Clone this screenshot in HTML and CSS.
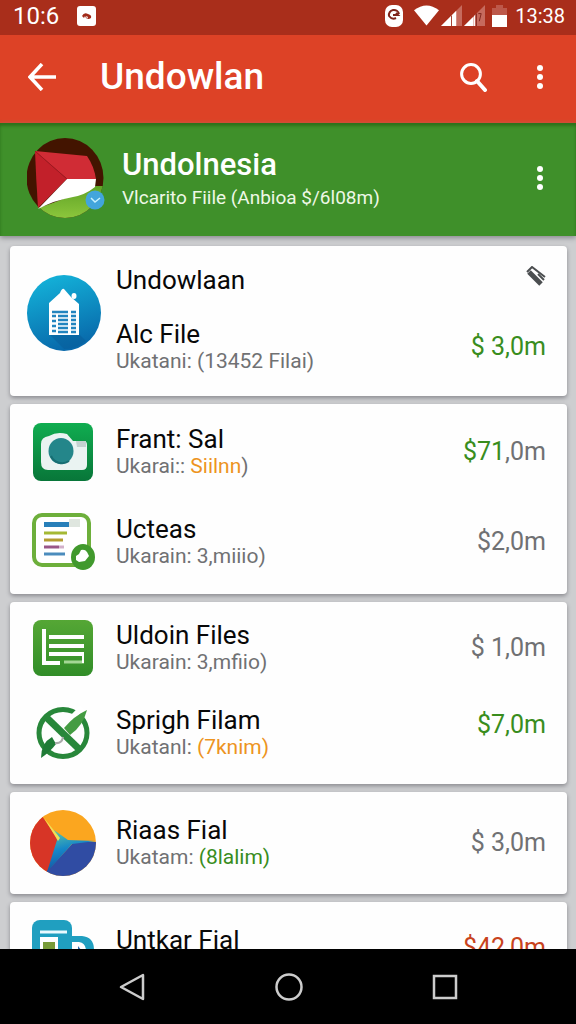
FILE: index.html
```html
<!DOCTYPE html>
<html lang="id">
<head>
<meta charset="utf-8">
<meta name="viewport" content="width=device-width, initial-scale=1">
<title>Undowlan</title>
<link rel="stylesheet" href="styles.css">
</head>
<body>
<div class="status">
  <span class="status-time">10:6</span>
  <svg class="status-app" width="20" height="20" viewBox="0 0 20 20"><rect width="19" height="20" rx="3" fill="#fff"/><path d="M5 10q2-4 6-2 4 1 3 4-3 2-5 0l-1-2-1 2z" fill="#a12a19"/><path d="M9 10l1 3 1-2z" fill="#fff"/></svg>
  <div class="status-right">
    <svg width="18" height="22" viewBox="0 0 18 22"><rect width="18" height="22" rx="7" fill="#fff"/><path d="M4 11a5 5 0 1 1 10-2M4 11q3 4 7 2M8 10h5l-2-2" fill="none" stroke="#7f251b" stroke-width="2"/></svg>
    <svg class="wifi" width="25" height="21" viewBox="0 0 26 21"><path d="M0 5Q13-5 26 5L13 21z" fill="#fff"/></svg>
    <svg width="21" height="21" viewBox="0 0 22 22"><path d="M0 22L22 0V22z" fill="#c66a5d"/><path d="M0 22L16 6V22z" fill="#fff"/><path d="M11 11v11" stroke="#a43a2b"/></svg>
    <svg width="21" height="21" viewBox="0 0 22 22"><path d="M0 22L22 0V22z" fill="#c66a5d"/><path d="M0 22L10 12V22z" fill="#fff"/><path d="M13 9v13M15 9h3l-2 8" stroke="#7f251b" fill="none"/><path d="M11 11v11" stroke="#fff"/></svg>
    <svg class="battery" width="15" height="22" viewBox="0 0 15 22"><path d="M0 3h4V0h7v3h4v8H0z" fill="#bd584a"/><path d="M0 10h15v12H0z" fill="#fff"/></svg>
    <span>13:38</span>
  </div>
</div>
<header class="appbar">
  <button class="icon-btn back" aria-label="Back"><svg width="28" height="28" viewBox="0 0 28 28"><path d="M28 14H2M14 1L2 14l12 13" fill="none" stroke="#fff" stroke-width="3.500"/></svg></button>
  <h1>Undowlan</h1>
  <button class="icon-btn search" aria-label="Search"><svg width="28" height="29" viewBox="0 0 28 29"><circle cx="11" cy="11" r="9.4" fill="none" stroke="#fff" stroke-width="3"/><path d="M17 18l8 9" stroke="#fff" stroke-width="4" stroke-linecap="round"/></svg></button>
  <button class="icon-btn" aria-label="More"><svg width="8" height="26" viewBox="0 0 8 26" fill="#fff"><circle cx="4" cy="4" r="3"/><circle cx="4" cy="13" r="3"/><circle cx="4" cy="22" r="3"/></svg></button>
</header>
<section class="profile">
  <svg class="avatar" width="78" height="80" viewBox="0 0 78 80">
    <defs><clipPath id="av"><ellipse cx="38" cy="40" rx="38.500" ry="40"/></clipPath>
    <linearGradient id="hill" x1="0" y1="0" x2="0" y2="1"><stop offset="0" stop-color="#5fa326"/><stop offset="1" stop-color="#8cc63c"/></linearGradient></defs>
    <g clip-path="url(#av)"><rect width="78" height="80" fill="#431400"/><path d="M0 72L11 70Q36 62 52 54Q62 49 69 48H78V80H0z" fill="url(#hill)"/></g>
    <path d="M8 13L40 41L11 70Q9 40 8 13z" fill="#c2202a"/><path d="M8 13L60 18Q67 28 69 41H40z" fill="#d02c35"/><path d="M40 41H69L68 49Q58 57 46 59Q28 62 11 71z" fill="#fff"/>
    <path d="M8 13L40 41" stroke="#9f1820"/>
    <circle cx="68" cy="62" r="9.500" fill="#42a5dc"/><path d="M64 60l4 4 5-4" fill="none" stroke="#c8f2ff" stroke-width="1.500"/>
  </svg>
  <div class="profile-text"><h2>Undolnesia</h2><p>Vlcarito Fiile (Anbioa $/6l08m)</p></div>
  <button class="icon-btn" aria-label="Profile options"><svg width="8" height="26" viewBox="0 0 8 26" fill="#fff"><circle cx="4" cy="4" r="3"/><circle cx="4" cy="13" r="3"/><circle cx="4" cy="22" r="3"/></svg></button>
</section>
<main>
  <section class="card featured">
    <svg class="feature-icon" width="76" height="78" viewBox="0 0 76 78">
      <defs><linearGradient id="blue" x1=".2" y1="0" x2=".5" y2="1"><stop offset="0" stop-color="#14b4da"/><stop offset="1" stop-color="#0868aa"/></linearGradient></defs>
      <ellipse cx="38" cy="39" rx="37" ry="38" fill="url(#blue)"/><path d="M23 60l15 15q12 0 22-8l-8-8z" fill="#075b98" opacity=".5"/>
      <path d="M23 29L34 19Q36 14 38 15L45 23L53 30V61H23z" fill="#fff"/><ellipse cx="48" cy="22" rx="2.500" ry="3" fill="#fff"/>
      <path d="M26 38h16M26 42h4M32 42h10M26 47h4M32 46h10M26 52h4M32 50h10M26 57h4M32 54h10M32 58h10M45 38h5M45 42h5M45 46h5M45 50h5M45 54h5M45 58h5" stroke="#2385bf" stroke-width="2.500"/>
    </svg>
    <div class="feature-body">
      <div class="feature-head"><h3>Undowlaan</h3><button class="icon-btn" aria-label="Edit"><svg width="20" height="22" viewBox="0 0 20 22"><path d="M3 6L15 18" stroke="#4b4e50" stroke-width="5"/><path d="M1 6L6 1L19 11" fill="none" stroke="#4b4e50" stroke-width="2"/><path d="M12 8L18 14" stroke="#4b4e50" stroke-width="2"/></svg></button></div>
      <div class="feature-row"><div><h3>Alc File</h3><p>Ukatani: (13452 Filai)</p></div><span class="amount green">$ 3,0m</span></div>
    </div>
  </section>
  <ul class="card">
    <li class="row">
      <svg width="60" height="58" viewBox="0 0 60 58"><defs><linearGradient id="cam" x1="0" y1="0" x2="0" y2="1"><stop offset="0" stop-color="#10ad50"/><stop offset="1" stop-color="#087639"/></linearGradient></defs><rect width="60" height="58" rx="8" fill="url(#cam)"/><path d="M8 21Q8 14 16 13Q24 8 34 11L40 18H51Q54 18 54 22V42Q54 47 49 47H15Q8 47 8 39z" fill="#eaf3f2"/><path d="M43 18h10v6H44z" fill="#c4d2d1"/><ellipse cx="28" cy="28" rx="12.500" ry="13" fill="#24868a"/><path d="M18 33a12 12 0 0 0 18 5" fill="none" stroke="#176e73" stroke-width="2"/></svg>
      <div><h3>Frant: Sal</h3><p>Ukarai:: <span class="orange">Siilnn</span>)</p></div><span class="amount"><span class="green">$71</span>,0m</span>
    </li>
    <li class="row">
      <svg width="63" height="57" viewBox="0 0 63 57"><rect x="2" y="2" width="55" height="50" rx="8" fill="#fff" stroke="#6daf3b" stroke-width="4"/><path d="M37 6h11v8H37z" fill="#dfe6df"/><path d="M12 11.500h25" stroke="#287fb9" stroke-width="5"/><path d="M12 20h23" stroke="#a5b934" stroke-width="3"/><path d="M12 27h19" stroke="#b39b31" stroke-width="3"/><path d="M12 34h15" stroke="#995688" stroke-width="3"/><path d="M27 34h5" stroke="#d2b0ca" stroke-width="3"/><path d="M12 41h21" stroke="#4b8cbd" stroke-width="3"/><ellipse cx="51" cy="44" rx="12" ry="13" fill="#41992d"/><path d="M44 43l3-2 2-4q4-1 6 2l2 4-4 5-6 1-3-2z" fill="#fff"/></svg>
      <div><h3>Ucteas</h3><p>Ukarain: 3,miiio)</p></div><span class="amount">$2,0m</span>
    </li>
  </ul>
  <ul class="card tight">
    <li class="row">
      <svg width="60" height="56" viewBox="0 0 60 56"><defs><linearGradient id="doc" x1="0" y1="0" x2="0" y2="1"><stop offset="0" stop-color="#55a735"/><stop offset="1" stop-color="#318d28"/></linearGradient></defs><rect width="60" height="56" rx="8" fill="url(#doc)"/><path d="M11 9v34h16M16 17h35M16 26h35M16 34h35" fill="none" stroke="#fff" stroke-width="4"/><path d="M31 42h20" stroke="#a4d795" stroke-width="3"/><path d="M50 34v9" stroke="#fff" stroke-width="2"/></svg>
      <div><h3>Uldoin Files</h3><p>Ukarain: 3,mfiio)</p></div><span class="amount">$ 1,0m</span>
    </li>
    <li class="row raised">
      <svg width="54" height="54" viewBox="0 0 54 54"><ellipse cx="27" cy="27" rx="24" ry="23.500" fill="none" stroke="#28873a" stroke-width="5"/><path d="M36 12L46 2" stroke="#fff" stroke-width="6"/><path d="M51 4Q38 10 28 22L34 29Q47 20 51 4z" fill="#449c42"/><path d="M10 11l33 32" stroke="#28873a" stroke-width="7"/><path d="M5 52Q5 37 16 31L20 38Q14 46 5 52z" fill="#1f7b36"/><path d="M19 37q7 1 8-6" fill="none" stroke="#aaa" stroke-width="2"/></svg>
      <div><h3>Sprigh Filam</h3><p>Ukatanl: <span class="orange">(7knim)</span></p></div><span class="amount green">$7,0m</span>
    </li>
  </ul>
  <ul class="card single">
    <li class="row">
      <svg width="66" height="66" viewBox="0 0 66 66"><defs><clipPath id="pie"><circle cx="33" cy="33" r="33"/></clipPath><linearGradient id="teal" x1="0" y1="0" x2=".3" y2="1"><stop offset="0" stop-color="#65cb9f"/><stop offset=".5" stop-color="#1587c8"/><stop offset="1" stop-color="#164f9c"/></linearGradient></defs><g clip-path="url(#pie)"><rect width="66" height="66" fill="#fba61f"/><path d="M12 6L29 31L17 66H0V0z" fill="#d73526"/><path d="M66 32H44L16 62V66H66z" fill="#304ca3"/><path d="M24 20L38 30L66 31L42 34L17 62L27 30z" fill="url(#teal)"/><path d="M14 8l14 23 2-3z" fill="#f0df55"/></g></svg>
      <div><h3>Riaas Fial</h3><p>Ukatam: <span class="green">(8lalim)</span></p></div><span class="amount">$ 3,0m</span>
    </li>
  </ul>
  <ul class="card last">
    <li class="row">
      <svg width="62" height="60" viewBox="0 0 62 60"><rect x="0" y="0" width="40" height="60" rx="8" fill="#209fc0"/><path d="M36 16h14q12 1 12 14v14H36z" fill="#209fc0"/><path d="M8 12h27" stroke="#e9faff" stroke-width="3"/><path d="M8 17h18v33H8z" fill="#fff"/><path d="M11 22h12v20H11z" fill="#789b38"/><path d="M40 22h7q7 1 7 9v8H40z" fill="#fff"/><path d="M46 26l7 9h-7z" fill="#286bb1"/></svg>
      <h3>Untkar Fial</h3><span class="amount red">$42,0m</span>
    </li>
  </ul>
</main>
<nav class="navbar" aria-label="System">
  <button class="icon-btn" aria-label="Back"><svg width="28" height="30" viewBox="0 0 28 30"><path d="M25 3v24L3 15z" fill="none" stroke="#ccc" stroke-width="2.500" stroke-linejoin="round"/></svg></button>
  <button class="icon-btn" aria-label="Home"><svg width="28" height="28" viewBox="0 0 28 28"><circle cx="14" cy="14" r="12.500" fill="none" stroke="#ccc" stroke-width="2.500"/></svg></button>
  <button class="icon-btn" aria-label="Recent apps"><svg width="26" height="26" viewBox="0 0 26 26"><rect x="2" y="2" width="22" height="22" fill="none" stroke="#ccc" stroke-width="2.500"/></svg></button>
</nav>
</body>
</html>
```
FILE: styles.css
```css
* { box-sizing: border-box; }
body {
  margin: 0;
  height: 100vh;
  display: flex;
  flex-direction: column;
  overflow: hidden;
  background: #cdced0;
  color: #080808;
  font-family: Roboto, "Liberation Sans", sans-serif;
}
h1, h2, h3, p, ul { margin: 0; padding: 0; }
svg { display: block; flex: none; }
.icon-btn { padding: 0; border: 0; background: none; cursor: pointer; }

.status {
  flex: none;
  display: flex;
  align-items: center;
  padding: 0 11px 4px 13px;
  height: 35px;
  background: #a92e1b;
  color: #fff;
  font-size: 24px;
}
.status-app { margin-left: 18px; }
.status-right { margin-left: auto; display: flex; align-items: center; gap: 2px; font-size: 20px; }
.wifi { margin-left: 9px; }
.battery { margin: 0 6px 0 5px; }

.appbar {
  flex: none;
  display: flex;
  align-items: center;
  height: 88px;
  padding: 0 32px 4px 28px;
  background: #dd4226;
  color: #fff;
}
.appbar h1 { margin-left: 44px; flex: 1; font-size: 37px; line-height: 44px; font-weight: 500; }
.search { margin-right: 48px; }

.profile {
  flex: none;
  display: flex;
  align-items: center;
  height: 113px;
  padding: 0 32px 4px 27px;
  background: #3f902a;
  box-shadow: inset 0 3px 3px #2d711b, 0 2px 5px #8a8a8f;
  color: #fff;
}
.profile-text { flex: 1; padding: 5px 0 0 17px; }
.profile h2 { font-size: 31px; line-height: 36px; font-weight: 500; }
.profile p { font-size: 19px; line-height: 30px; white-space: nowrap; color: #eef8e6; }

main {
  flex: 1;
  min-height: 0;
  overflow: hidden;
  display: flex;
  flex-direction: column;
  gap: 8px;
  padding: 10px 9px 0 10px;
}
.card {
  flex: none;
  display: flex;
  flex-direction: column;
  gap: 36px;
  padding: 19px 21px 27px 0;
  list-style: none;
  background: #fefefe;
  border-radius: 4px;
  box-shadow: 0 2px 4px #8b8b90;
}
.card.tight { gap: 32px; padding: 18px 21px 24px 0; }
.card.single { padding: 18px 21px 30px 0; }
.card.featured { flex-direction: row; gap: 0; padding: 20px 21px 22px 0; }
.feature-icon { margin: 8px 13px 0 16px; }
.feature-body { flex: 1; display: flex; flex-direction: column; gap: 26px; padding-left: 1px; }
.feature-head, .feature-row { display: flex; justify-content: space-between; align-items: center; }
.feature-head .icon-btn { align-self: flex-start; }
.row { display: grid; grid-template-columns: 106px 1fr auto; align-items: center; height: 54px; }
.row > svg { justify-self: center; }
.row.raised .amount { align-self: start; padding-top: 3px; }
.card h3 { font-size: 26px; line-height: 28px; font-weight: 400; }
.card p { font-size: 21px; line-height: 26px; color: #707173; }
.amount { font-size: 25px; line-height: 32px; color: #707173; }
.card.last { padding-top: 18px; }
.card.last .row { align-items: start; }
.card.last h3 { padding-top: 6px; }
.card.last .amount { padding-top: 12px; }
.card .green { color: #398d1d; }
.card .orange { color: #ed941f; }
.card .red { color: #c8431d; }

.navbar {
  flex: none;
  display: flex;
  justify-content: center;
  align-items: center;
  gap: 129px;
  height: 75px;
  background: #000;
}
```
